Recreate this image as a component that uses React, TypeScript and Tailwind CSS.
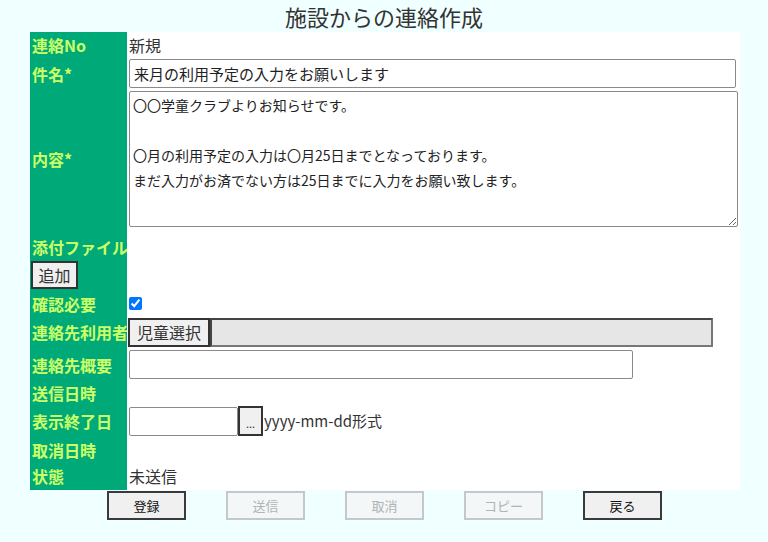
import React from "react";

const F = { fontFamily: '"Noto Sans CJK JP", "Noto Sans", sans-serif' };

function Row({ label, h, children, labelExtra }: { label: string; h: string; children?: React.ReactNode; labelExtra?: React.ReactNode }) {
  return (
    <div className={`flex ${h}`}>
      <div className="w-[97px] shrink-0 bg-[#00aa78] pl-[2px] flex flex-col justify-center text-[16px] font-bold text-[#ccff66] whitespace-nowrap overflow-visible">
        <span className="leading-[22px]">{label}</span>
        {labelExtra}
      </div>
      <div className="flex-1 flex items-center pl-[2px] text-[16px] text-[#333]">{children}</div>
    </div>
  );
}

export default function App() {
  const btnOn = "w-[79px] h-[29px] border-2 border-[#3a3a3a] bg-[#f0f0f0] text-[13px] text-[#111] flex items-center justify-center";
  const btnOff = "w-[79px] h-[29px] border-2 border-[#c4c8c8] bg-[#f3f7f7] text-[13px] text-[#b0b4b4] flex items-center justify-center";
  return (
    <div style={F} className="min-h-[542px] w-[768px] bg-[#f0ffff] text-[#333]">
      <h1 className="h-[32px] text-center text-[22px] leading-[32px] font-normal text-[#333]">施設からの連絡作成</h1>
      <div className="ml-[30px] w-[710px] bg-white">
        <Row label="連絡No" h="h-[26px]">新規</Row>
        <Row label="件名*" h="h-[31px]">
          <input
            style={F}
            defaultValue="来月の利用予定の入力をお願いします"
            className="w-[607px] h-[29px] border border-[#8a8a8a] rounded-[2px] px-[4px] text-[15px] text-[#222] outline-none"
          />
        </Row>
        <Row label="内容*" h="h-[140px]">
          <textarea
            style={F}
            defaultValue={"〇〇学童クラブよりお知らせです。\n\n〇月の利用予定の入力は〇月25日までとなっております。\nまだ入力がお済でない方は25日までに入力をお願い致します。"}
            className="w-[609px] h-[136px] border border-[#8a8a8a] rounded-[2px] px-[3px] py-[1px] text-[14px] leading-[25px] text-[#222] outline-none"
          />
        </Row>
        <div className="flex h-[62px]">
          <div className="w-[97px] shrink-0 bg-[#00aa78] pl-[1px] pt-[6px] flex flex-col text-[16px] font-bold text-[#ccff66] whitespace-nowrap">
            <span className="pl-[1px] leading-[24px]">添付ファイル</span>
            <button style={F} className="mt-[2px] w-[47px] h-[28px] border-2 border-[#333] bg-[#f0f0f0] text-[16px] font-normal text-[#333] flex items-center justify-center">追加</button>
          </div>
          <div className="flex-1" />
        </div>
        <Row label="確認必要" h="h-[25px]">
          <input type="checkbox" defaultChecked className="w-[13px] h-[13px] m-0 accent-[#0075ff]" />
        </Row>
        <Row label="連絡先利用者" h="h-[32px]">
          <div className="flex items-center -ml-[1px]">
            <button style={F} className="w-[82px] h-[29px] border-2 border-[#333] bg-[#f0f0f0] text-[16px] text-[#333] flex items-center justify-center">児童選択</button>
            <div className="w-[503px] h-[29px] border-2 border-t-[#444] border-l-[#444] border-r-[#777] border-b-[#777] bg-[#e6e6e6]" />
          </div>
        </Row>
        <Row label="連絡先概要" h="h-[33px]">
          <input className="w-[504px] h-[29px] border border-[#8a8a8a] rounded-[2px] outline-none" />
        </Row>
        <Row label="送信日時" h="h-[24px]" />
        <Row label="表示終了日" h="h-[32px]">
          <input className="w-[109px] h-[29px] border border-[#8a8a8a] rounded-[2px] outline-none" />
          <button className="w-[25px] h-[30px] border-2 border-[#333] bg-[#f0f0f0] text-[11px] text-[#333] flex items-center justify-center leading-none pt-[4px]">...</button>
          <span className="text-[15px] text-[#333] ml-[1px]">yyyy-mm-dd形式</span>
        </Row>
        <Row label="取消日時" h="h-[25px]" />
        <Row label="状態" h="h-[28px]">未送信</Row>
      </div>
      <div className="flex gap-[40px] pl-[107px] pt-[1px]">
        <button style={F} className={btnOn}>登録</button>
        <button style={F} className={btnOff} disabled>送信</button>
        <button style={F} className={btnOff} disabled>取消</button>
        <button style={F} className={btnOff} disabled>コピー</button>
        <button style={F} className={btnOn}>戻る</button>
      </div>
    </div>
  );
}
